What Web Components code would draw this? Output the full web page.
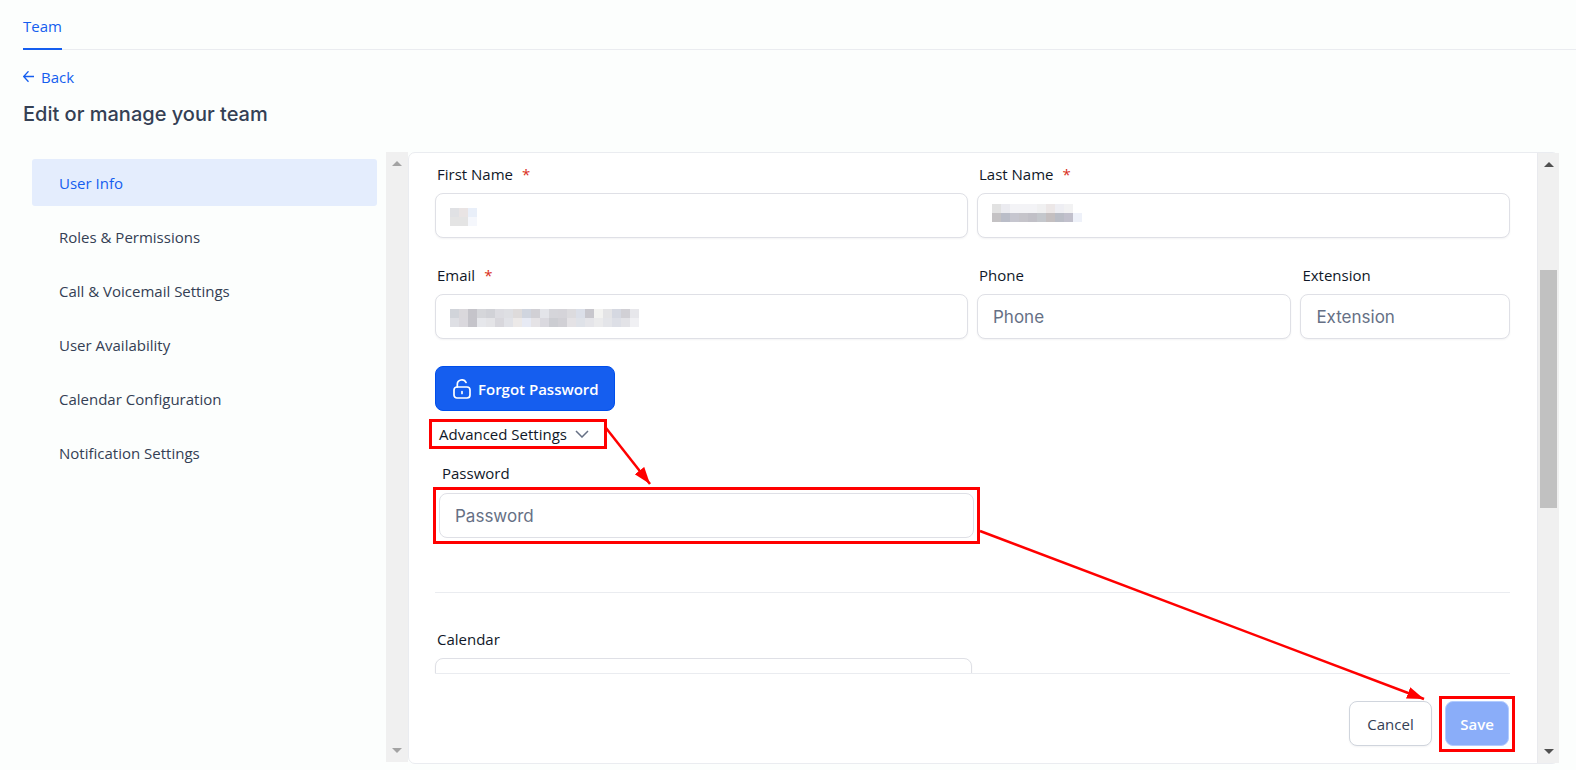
<!DOCTYPE html>
<html lang="en">
<head>
<meta charset="utf-8">
<title>Team</title>
<style>
*{box-sizing:border-box}
html,body{margin:0;height:100%}
body{background:#fcfefd;font:15px/22px "Open Sans","Noto Sans",sans-serif;color:#101828}
.row{display:grid;grid-template-columns:1fr 1fr;gap:9px}
.pair{display:grid;grid-template-columns:3fr 2fr;gap:9px}
</style>
</head>
<body>
<team-page>
  <tab-bar slot="tabs"></tab-bar>
  <page-heading slot="heading">Edit or manage your team</page-heading>
  <side-nav slot="nav">
    <nav-item active>User Info</nav-item>
    <nav-item>Roles &amp; Permissions</nav-item>
    <nav-item>Call &amp; Voicemail Settings</nav-item>
    <nav-item>User Availability</nav-item>
    <nav-item>Calendar Configuration</nav-item>
    <nav-item>Notification Settings</nav-item>
  </side-nav>
  <scroll-rail slot="nav" disabled></scroll-rail>
  <form-card>
    <form-stack>
      <div class="row">
        <text-field label="First Name" required mask="first"></text-field>
        <text-field label="Last Name" required mask="last"></text-field>
      </div>
      <div class="row">
        <text-field label="Email" required mask="email"></text-field>
        <div class="pair">
          <text-field label="Phone" hint="Phone"></text-field>
          <text-field label="Extension" hint="Extension"></text-field>
        </div>
      </div>
    </form-stack>
    <password-section></password-section>
    <text-field id="calendar" label="Calendar" half></text-field>
    <card-footer slot="footer"></card-footer>
    <scroll-rail slot="rail" thumb></scroll-rail>
  </form-card>
</team-page>
<callout-arrows></callout-arrows>
<script>
const define = (name, html, init) => {
  const t = document.createElement('template');
  t.innerHTML = '<style>*{box-sizing:border-box}:host{display:block}</style>' + html;
  customElements.define(name, class extends HTMLElement {
    connectedCallback() {
      if (this.shadowRoot) return;
      this.attachShadow({mode: 'open'}).append(t.content.cloneNode(true));
      if (init) init(this, this.shadowRoot);
    }
  });
};

define('team-page', `<style>
:host{min-height:100%;display:flex;flex-direction:column;padding-bottom:6px}
.main{flex:1;display:grid;grid-template-columns:376px 22px minmax(0,1fr);padding:0 17px 0 10px;min-height:0}
::slotted(form-card){grid-column:3}
</style><slot name="tabs"></slot><slot name="heading"></slot><main class="main"><slot name="nav"></slot><slot></slot></main>`);

define('tab-bar', `<style>
:host{height:50px;margin-left:23px;border-bottom:1px solid #eaecf0}
a{display:inline-block;height:50px;padding-top:15px;color:#155eef;text-decoration:none;border-bottom:2px solid #155eef}
</style><nav><a href="#team">Team</a></nav>`);

define('page-heading', `<style>
:host{height:102px;padding:16px 23px 0}
a{display:inline-flex;align-items:center;gap:7px;color:#155eef;text-decoration:none}
h1{margin:12px 0 0;font:500 20px/28px Inter,sans-serif;color:#344054}
</style><a href="#back"><svg width="11" height="12" viewBox="0 0 11 12" fill="none" stroke="#155eef" stroke-width="1.3"><path d="M11 5.500H1M5.500 .3L.7 5.500l4.800 5.200"/></svg>Back</a><h1><slot></slot></h1>`);

define('side-nav', `<style>
:host{padding:7px 9px 0 22px}
nav{display:flex;flex-direction:column;gap:7px}
</style><nav aria-label="Settings"><slot></slot></nav>`);

define('nav-item', `<style>
a{display:flex;align-items:center;height:47px;padding:0 27px;border-radius:3px;color:#344054;text-decoration:none}
:host([active]) a{background:#e4edfd;color:#155eef}
</style><a href="#section"><slot></slot></a>`);

define('scroll-rail', `<style>
:host{width:22px;background:#f0f0f0;color:#505050;display:flex;flex-direction:column;align-items:center;justify-content:space-between;padding:9px 0}
:host([disabled]){color:#a3a3a3;margin-bottom:2px}
:host([thumb]){border-left:1px solid #e9eaee;margin-right:-1px}
i{display:none;width:17px;flex:0 0 238px;background:#c1c1c1}
:host([thumb]) i{display:block}
.a{flex:1;max-height:108px}
.b{flex:1;display:flex;align-items:flex-end}
svg{display:block}
</style><div class="a"><svg width="10" height="5"><path d="M0 5L5 0l5 5z" fill="currentColor"/></svg></div><i></i><div class="b"><svg width="10" height="5"><path d="M0 0h10L5 5z" fill="currentColor"/></svg></div>`);

define('form-card', `<style>
:host{display:flex;background:#fff;border:1px solid #eaecf0;border-radius:7px;min-height:0}
.body{flex:1;min-width:0;display:flex;flex-direction:column;padding:0 27px 0 26px}
.view{flex:1 1 0;min-height:0;overflow:hidden;margin:0 -3px 0 -7px;padding:10px 3px 0 7px}
</style><div class="body"><div class="view"><slot></slot></div><slot name="footer"></slot></div><slot name="rail"></slot>`);

define('form-stack', `<style>:host{display:flex;flex-direction:column;gap:26px}</style><slot></slot>`);

const masks = {
  first: [['#e0e1e4','#e9e4e4','#e9eff9'],['#e4e4e4','#e4e4e4','#f5f7fc']],
  last: [['#e2e2e2','#ebebf0','#f3f3f6','#f3f3f6','#f3f3f6','#f0f0f1','#ece7e7','#eeeef3','#f2f2f3','#fff'],['#c4c2c4','#babdc8','#c6c6cf','#c5c4ca','#c1c0c7','#c4c7cc','#c4bfc0','#babdc6','#c1c0cc','#eef1f9']],
  email: [['#d1d4da','#dad8dc','#c5c4ca','#d5d6da','#d1d2d7','#dcdce1','#dedfe3','#dedbdb','#d0d5df','#d1d0d5','#e3e4e9','#d5d5da','#d5d4d9','#dcdbde','#dbdfe8','#c8c7cd','#f3f3f1','#e4e4e6','#d5d8e1','#d1d0d5','#e7e7eb'],['#dedfe4','#dad8dd','#c5c4ca','#e6e7eb','#e4e4e7','#d8d7dc','#e1e2e7','#ece9e8','#e7eaf4','#e5e3e6','#dad9df','#cccdd2','#d1d0d5','#e4e2e5','#dfe2e8','#e5e5e9','#ebebec','#e4e5e9','#dddfe6','#e3e3e7','#f0f0f3']]
};

define('text-field', `<style>
:host{min-width:0}
:host([half]){width:537px;max-width:100%;padding-top:35px}
label{display:block;padding-left:2px;margin-bottom:8px}
b{font-weight:400;color:#d92d20;margin-left:9px}
.box{position:relative}
input{display:block;width:100%;height:45px;padding:0 15px;border:1px solid #dfe0e6;border-radius:8px;background:#fff;font:17px/24px Inter,sans-serif;color:#101828;box-shadow:0 1px 2px #1018280d;outline:0}
input::placeholder{color:#667085;opacity:1}
.box svg{position:absolute;left:15px;top:15px}
:host([mask=last]) svg{top:11px}
</style><label for="f"></label><div class="box"><input id="f"></div>`, (el, root) => {
  const label = root.querySelector('label');
  label.textContent = el.getAttribute('label');
  if (el.hasAttribute('required')) {
    const star = document.createElement('b');
    star.textContent = '*';
    label.append(star);
  }
  root.querySelector('input').placeholder = el.getAttribute('hint') || '';
  const m = masks[el.getAttribute('mask')];
  if (m) root.querySelector('.box').insertAdjacentHTML('beforeend',
    `<svg width="${m[0].length * 9}" height="18" shape-rendering="crispEdges">` +
    m.map((r, y) => r.map((c, x) => `<rect x="${x * 9}" y="${y * 9}" width="9" height="9" fill="${c}"/>`).join('')).join('') + '</svg>');
});

define('mark-box', `<style>:host{display:block;border:3px solid #f00}</style><slot></slot>`);

define('password-section', `<style>
:host{padding-top:27px;border-bottom:1px solid #eaecf0;height:254px}
.forgot{display:flex;align-items:center;gap:7px;height:45px;padding:0 15px 0 17px;border:1px solid #004eeb;border-radius:8px;background:#155eef;color:#fff;font:600 15px/22px "Open Sans",sans-serif}
.adv{display:flex;align-items:center;gap:8px;width:100%;height:24px;padding:0 7px;border:0;background:none;font:inherit;color:#101828}
.m1{width:178px;margin:8px 0 0 -6px}
.pw{width:547px;max-width:100%;margin-left:-2px}
.pw mark-box{padding:3px}
label{display:block;padding:13px 0 3px 9px}
input{display:block;width:100%;height:45px;padding:0 15px;border:1px solid #dfe0e6;border-radius:8px;font:17px/24px Inter,sans-serif;outline:0}
input::placeholder{color:#667085;opacity:1}
</style>
<button class="forgot"><svg width="18" height="20" viewBox="0 0 18 20" fill="none" stroke="#fff" stroke-width="1.700" stroke-linecap="round"><path d="M4.300 8V5.500A4.600 4.600 0 0 1 13 3.400M9 12.500v2"/><rect x="1" y="8" width="16" height="11" rx="3"/></svg>Forgot Password</button>
<mark-box class="m1"><button class="adv" aria-expanded="true">Advanced Settings<svg width="14" height="8" viewBox="0 0 14 8" fill="none" stroke="#667085" stroke-width="1.500"><path d="M1 1l6 6 6-6"/></svg></button></mark-box>
<div class="pw"><label for="p">Password</label><mark-box class="m2"><input id="p" type="password" placeholder="Password"></mark-box></div>`);

define('card-footer', `<style>
:host{display:flex;justify-content:flex-end;align-items:flex-start;gap:7px;height:90px;padding-top:23px;margin-right:-5px;position:relative}
:host::before{content:"";position:absolute;left:0;right:5px;top:0;border-top:1px solid #eaecf0}
button{height:45px;border-radius:8px;font:500 15px/22px "Open Sans",sans-serif;padding:0}
.c{width:83px;margin-top:5px;border:1px solid #d0d5dd;background:#fff;color:#344054;box-shadow:0 1px 2px #1018280d}
.s{display:block;width:100%;border:1px solid #b2ccff;background:#8aadf9;color:#fff;font-weight:600}
mark-box{width:76px;padding:2px 3px 3px}
</style><button class="c">Cancel</button><mark-box><button class="s">Save</button></mark-box>`);

define('callout-arrows', `<style>
:host{position:absolute;inset:0;pointer-events:none;overflow:hidden}
svg{width:100%;height:100%;display:block}
</style><svg aria-hidden="true"><defs><marker id="h" markerUnits="userSpaceOnUse" markerWidth="18" markerHeight="14" refX="17" refY="6" orient="auto"><path d="M0 0L17 6 0 12z" fill="#f00"/></marker></defs><g stroke="#f00" stroke-width="2.500"><line marker-end="url(#h)"/><line marker-end="url(#h)"/></g></svg>`, (el, root) => {
  const [first, second] = root.querySelectorAll('line');
  const draw = () => {
    const pw = document.querySelector('password-section').shadowRoot;
    const adv = pw.querySelector('.m1').getBoundingClientRect();
    const pass = pw.querySelector('.m2').getBoundingClientRect();
    const save = document.querySelector('card-footer').shadowRoot.querySelector('mark-box').getBoundingClientRect();
    const set = (l, a, b, c, d) => { l.setAttribute('x1', a); l.setAttribute('y1', b); l.setAttribute('x2', c); l.setAttribute('y2', d); };
    set(first, adv.right - 1, adv.top + 9, adv.right + 43, pass.top - 3);
    set(second, pass.right, pass.bottom - 13, save.left - 15, save.top + 3);
  };
  draw();
  addEventListener('resize', draw);
  addEventListener('load', draw);
});
</script>
</body>
</html>
